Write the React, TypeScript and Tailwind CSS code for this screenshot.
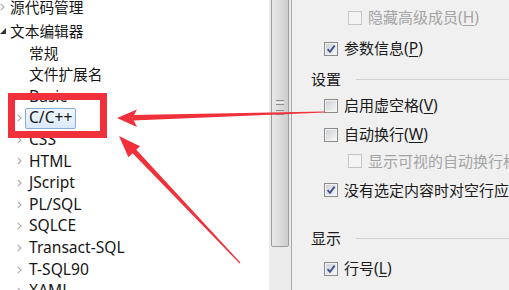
import React from 'react';

function Chevron() {
  return (
    <svg width="5" height="8" viewBox="0 0 5 8" className="shrink-0">
      <path d="M0.8 0.8 L4 4 L0.8 7.2" fill="none" stroke="#a9a9a9" strokeWidth="1.1" />
    </svg>
  );
}

function Expanded() {
  return (
    <svg width="6" height="6" viewBox="0 0 6 6" className="shrink-0">
      <polygon points="6,0 6,6 0,6" fill="#333333" />
    </svg>
  );
}

type TreeItem = { label: string; chevron: boolean; selected?: boolean; latin?: boolean };

const children: TreeItem[] = [
  { label: '常规', chevron: false },
  { label: '文件扩展名', chevron: false },
  { label: 'Basic', chevron: true, latin: true },
  { label: 'C/C++', chevron: true, selected: true, latin: true },
  { label: 'CSS', chevron: true, latin: true },
  { label: 'HTML', chevron: true, latin: true },
  { label: 'JScript', chevron: true, latin: true },
  { label: 'PL/SQL', chevron: true, latin: true },
  { label: 'SQLCE', chevron: true, latin: true },
  { label: 'Transact-SQL', chevron: true, latin: true },
  { label: 'T-SQL90', chevron: true, latin: true },
  { label: 'XAML', chevron: true, latin: true },
];

function Tree() {
  return (
    <div className="w-[269px] h-full bg-white overflow-hidden text-[14.7px] text-[#161616] font-['Noto_Sans','Noto_Sans_CJK_SC',sans-serif]">
      <div className="flex flex-col mt-[-1px]">
        <div className="h-[21.65px] flex items-center">
          <span className="mb-[5px]">
            <Chevron />
          </span>
          <span className="ml-[5px] mb-[5px] leading-none whitespace-nowrap">源代码管理</span>
        </div>
        <div className="h-[21.65px] flex items-center">
          <Expanded />
          <span className="ml-[4px] leading-none whitespace-nowrap">文本编辑器</span>
        </div>
        {children.map((c) => (
          <div key={c.label} className="h-[21.65px] flex items-center pl-[17px]">
            {c.chevron ? <Chevron /> : <span className="w-[5px] shrink-0" />}
            {c.selected ? (
              <span className="ml-[3px] h-[21px] flex items-center px-[3px] border border-[#86acdc] rounded-[2px] bg-gradient-to-b from-[#f1f7fe] to-[#d9e9fb] leading-none whitespace-nowrap text-[15.6px]">
                {c.label}
              </span>
            ) : (
              <span className={`ml-[7px] leading-none whitespace-nowrap ${c.latin ? 'text-[15.6px]' : ''}`}>
                {c.label}
              </span>
            )}
          </div>
        ))}
      </div>
    </div>
  );
}

function Scrollbar() {
  return (
    <div className="w-[22px] h-full bg-[#ebebeb] flex flex-col shrink-0">
      <div className="mx-[2px] h-[250px] mt-[-3px] rounded-b-[2px] border border-[#9c9c9c] bg-gradient-to-r from-[#e9e9e9] via-[#dcdcdc] to-[#cdcdcd] flex flex-col items-center justify-end pb-[131px]">
        <div className="flex flex-col gap-[1px]">
          <div className="w-[8px] h-[1px] bg-[#8a8a8a]" />
          <div className="w-[8px] h-[1px] bg-[#f4f4f4]" />
          <div className="w-[8px] h-[1px] bg-[#8a8a8a]" />
          <div className="w-[8px] h-[3px]" />
          <div className="w-[8px] h-[1px] bg-[#8a8a8a]" />
          <div className="w-[8px] h-[1px] bg-[#f4f4f4]" />
          <div className="w-[8px] h-[1px] bg-[#8a8a8a]" />
        </div>
      </div>
    </div>
  );
}

function Check({ checked, disabled }: { checked?: boolean; disabled?: boolean }) {
  return (
    <span
      className={
        disabled
          ? 'w-[14px] h-[14px] shrink-0 border border-[#c6c6c6] bg-[#f4f4f4] flex items-center justify-center'
          : 'w-[14px] h-[14px] shrink-0 border border-[#8a8b8b] bg-gradient-to-br from-[#cbcfd4] to-[#f8f8f8] shadow-[inset_0_0_0_1px_#f2f2f2] flex items-center justify-center'
      }
    >
      {checked && (
        <svg width="12" height="12" viewBox="0 0 12 12">
          <path d="M2.6 6.2 L5 8.8 L9.6 2.6" fill="none" stroke="#3b4f8e" strokeWidth="1.8" />
        </svg>
      )}
    </span>
  );
}

function Opt({
  label,
  mn,
  checked,
  disabled,
  indent,
  mt,
}: {
  label: string;
  mn?: string;
  checked?: boolean;
  disabled?: boolean;
  indent?: boolean;
  mt: string;
}) {
  return (
    <div className={`h-[26px] flex items-center ${indent ? 'pl-[56px]' : 'pl-[32px]'} ${mt}`}>
      <Check checked={checked} disabled={disabled} />
      <span
        className={`ml-[6px] leading-none whitespace-nowrap ${disabled ? 'text-[#a4a4a4]' : 'text-[#1a1a1a]'}`}
      >
        {label}
        {mn && (
          <span className="text-[15.6px]">
            (<span className="underline underline-offset-2">{mn}</span>)
          </span>
        )}
      </span>
    </div>
  );
}

function Header({ label, mt }: { label: string; mt: string }) {
  return (
    <div className={`h-[26px] flex items-center pl-[19px] pr-0 ${mt}`}>
      <span className="leading-none whitespace-nowrap text-[#1a1a1a]">{label}</span>
      <div className="ml-[15px] flex-1 h-[1px] bg-[#d2d2d2]" />
    </div>
  );
}

function Options() {
  return (
    <div className="flex-1 h-full bg-[#f0f0f0] overflow-hidden text-[15px] font-['Noto_Sans','Noto_Sans_CJK_SC',sans-serif]">
      <div className="flex flex-col w-[260px]">
        <Opt label="隐藏高级成员" mn="H" disabled indent mt="mt-[5px]" />
        <Opt label="参数信息" mn="P" checked mt="mt-[4.5px]" />
        <Header label="设置" mt="mt-[4.5px]" />
        <Opt label="启用虚空格" mn="V" mt="mt-[0.5px]" />
        <Opt label="自动换行" mn="W" mt="mt-[3.5px]" />
        <Opt label="显示可视的自动换行标志符号" disabled indent mt="mt-0" />
        <Opt label="没有选定内容时对空行应用剪切或复制命令" checked mt="mt-[3px]" />
        <Header label="显示" mt="mt-[22px]" />
        <Opt label="行号" mn="L" checked mt="mt-[4.5px]" />
        <Opt label="启用单击 URL 导航" mn="U" checked mt="mt-[3.5px]" />
      </div>
    </div>
  );
}

export default function App() {
  return (
    <div className="relative w-[509px] h-[290px] overflow-hidden flex bg-white">
      <Tree />
      <Scrollbar />
      <div className="w-[1px] h-full bg-[#a9a9a9] shrink-0" />
      <Options />

      {/* annotation: red box */}
      <div className="absolute left-[8px] top-[93px] w-[99px] h-[45px] border-[7px] border-[#f0303a]" />

      {/* annotation: arrows */}
      <svg className="absolute left-0 top-0 pointer-events-none" width="509" height="290" viewBox="0 0 509 290">
        <polygon points="133,115 325,111.6 325,112.4 133,120.5" fill="#f0303a" />
        <polygon points="117,118 137,109.5 132.5,117.8 137,127" fill="#f0303a" />
        <polygon points="131.6,152.2 135.2,148.6 240.4,262.6 239.6,263.4" fill="#f0303a" />
        <polygon points="119,136 140,146.3 134.2,151.8 128.4,157.3" fill="#f0303a" />
      </svg>
    </div>
  );
}
